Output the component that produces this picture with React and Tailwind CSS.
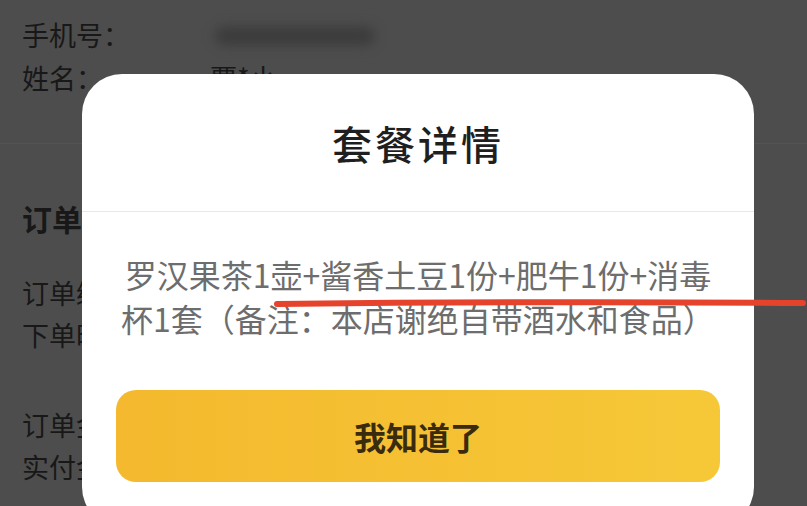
export default function App() {
  const font = "font-['Noto_Sans_CJK_SC','Noto_Sans',sans-serif]";

  return (
    <div className={`relative w-[807px] h-[506px] overflow-hidden bg-[#4d4d4d] ${font}`}>
      {/* page behind the dialog */}
      <div className="text-[#181818]">
        <div className="pt-[14px] pb-[43px] pl-[22px] border-b border-[#545454]">
          <div className="h-[43px] flex items-center text-[27px]">
            <span className="w-[193px]">手机号：</span>
            <div className="w-[160px] h-[18px] rounded-full bg-[#3b3b3b] blur-[6px]" />
          </div>
          <div className="h-[43px] flex items-center text-[27px]">
            <span className="w-[188px]">姓名：</span>
            <span>覃*小</span>
          </div>
        </div>
        <div className="pl-[22px]">
          <div className="mt-[52px] h-[44px] flex items-center text-[30px] font-bold">
            订单信息
          </div>
          <div className="mt-[32px] h-[42px] flex items-center text-[27px]">订单编号：</div>
          <div className="h-[42px] flex items-center text-[27px]">下单时间：</div>
          <div className="mt-[48px] h-[42px] flex items-center text-[27px]">订单金额：</div>
          <div className="h-[42px] flex items-center text-[27px]">实付金额：</div>
        </div>
      </div>

      {/* dialog */}
      <div className="absolute left-[82px] top-[74px] w-[672px] h-[453px] bg-white rounded-[40px] flex flex-col">
        <div className="h-[138px] flex items-center justify-center border-b border-[#e8e8e8] text-[40px] tracking-[3px] font-medium text-[#1f1f1f]">
          套餐详情
        </div>
        <div className="pt-[40px] text-center text-[32px] leading-[44px] text-[#6d6d6d]">
          罗汉果茶1壶+酱香土豆1份+肥牛1份+消毒
          <br />
          杯1套（备注：本店谢绝自带酒水和食品）
        </div>
        <button className="mt-[50px] mx-[34px] h-[92px] rounded-[20px] bg-gradient-to-r from-[#f4b92e] to-[#f6c838] flex items-center justify-center text-[32px] font-bold text-[#3a2a0e]">
          我知道了
        </button>
      </div>

      {/* red pen mark */}
      <svg className="absolute inset-0 pointer-events-none" width="807" height="506">
        <path
          d="M277 304 Q540 301 803 303"
          fill="none"
          stroke="#e5432c"
          strokeWidth="6"
          strokeLinecap="round"
        />
      </svg>
    </div>
  );
}
